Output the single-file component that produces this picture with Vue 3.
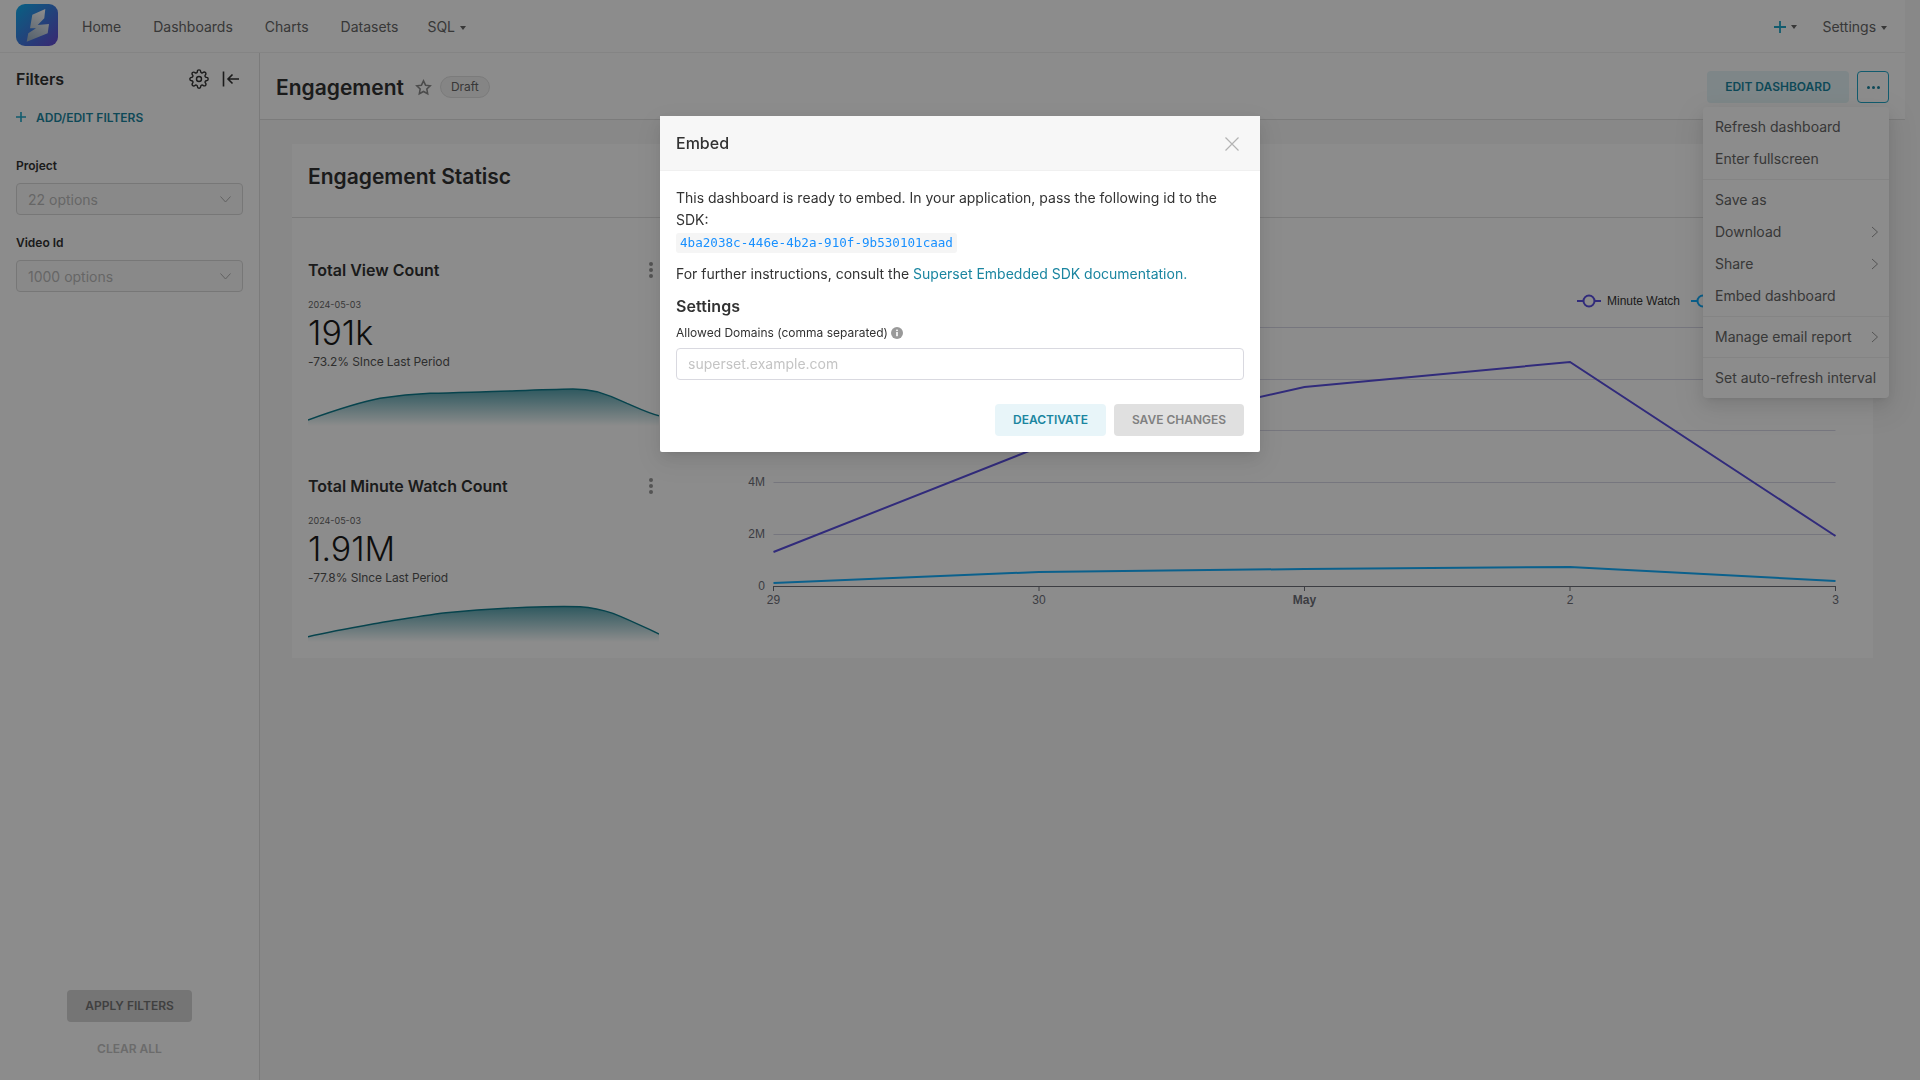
<template>
  <div class="page">
    <div class="shell">
      <header class="topbar">
        <svg class="logo" width="42" height="42" viewBox="0 0 42 42">
          <defs>
            <linearGradient id="logoBg" x1="0" y1="0" x2="1" y2="1">
              <stop offset="0" stop-color="#10b0f0" />
              <stop offset="1" stop-color="#6a48d0" />
            </linearGradient>
            <linearGradient id="logoS" x1="0.7" y1="0" x2="0.3" y2="1">
              <stop offset="0" stop-color="#ffffff" />
              <stop offset="1" stop-color="#9fb4c8" />
            </linearGradient>
          </defs>
          <rect width="42" height="42" rx="9" fill="url(#logoBg)" />
          <path d="M16.3 10.7 29.3 5 28.3 14.3 21.7 21 33 20 31.7 29.3 10.7 37.7 12.3 29.3 20 24.3 14 24.3Z" fill="url(#logoS)" />
        </svg>
        <nav class="nav">
          <a v-for="item in navItems" :key="item" class="nav-link">{{ item }}</a>
          <a class="nav-link sql">SQL <i class="caret"></i></a>
        </nav>
        <div class="topbar-right">
          <span class="plus">
            <svg width="14" height="14" viewBox="0 0 14 14"><path d="M7 1v12M1 7h12" stroke="#20a7c9" stroke-width="1.8" fill="none" /></svg>
            <i class="caret"></i>
          </span>
          <a class="nav-link">Settings <i class="caret"></i></a>
        </div>
      </header>

      <div class="body">
        <aside class="sidebar">
          <div class="filters-head">
            <span class="filters-title">Filters</span>
            <svg class="gear" width="20" height="20" viewBox="0 0 24 24" fill="none" stroke="#323232" stroke-width="1.7">
              <circle cx="12" cy="12" r="3" />
              <path d="M19.4 15a1.65 1.65 0 0 0 .33 1.82l.06.06a2 2 0 0 1 0 2.83 2 2 0 0 1-2.83 0l-.06-.06a1.65 1.65 0 0 0-1.82-.33 1.65 1.65 0 0 0-1 1.51V21a2 2 0 0 1-2 2 2 2 0 0 1-2-2v-.09A1.65 1.65 0 0 0 9 19.4a1.65 1.65 0 0 0-1.82.33l-.06.06a2 2 0 0 1-2.83 0 2 2 0 0 1 0-2.83l.06-.06a1.65 1.65 0 0 0 .33-1.82 1.65 1.65 0 0 0-1.51-1H3a2 2 0 0 1-2-2 2 2 0 0 1 2-2h.09A1.65 1.65 0 0 0 4.6 9a1.65 1.65 0 0 0-.33-1.82l-.06-.06a2 2 0 0 1 0-2.83 2 2 0 0 1 2.83 0l.06.06a1.65 1.65 0 0 0 1.82.33H9a1.65 1.65 0 0 0 1-1.51V3a2 2 0 0 1 2-2 2 2 0 0 1 2 2v.09a1.65 1.65 0 0 0 1 1.51 1.65 1.65 0 0 0 1.82-.33l.06-.06a2 2 0 0 1 2.83 0 2 2 0 0 1 0 2.83l-.06.06a1.65 1.65 0 0 0-.33 1.82V9a1.65 1.65 0 0 0 1.51 1H21a2 2 0 0 1 2 2 2 2 0 0 1-2 2h-.09a1.65 1.65 0 0 0-1.51 1z" />
            </svg>
            <svg class="collapse" width="18" height="16" viewBox="0 0 18 16" fill="none" stroke="#323232" stroke-width="1.6">
              <path d="M1.5 0.5v15M17 8H6M10.5 3.5 6 8l4.5 4.5" />
            </svg>
          </div>
          <div class="add-filter">
            <svg width="10" height="10" viewBox="0 0 10 10"><path d="M5 0v10M0 5h10" stroke="#20a7c9" stroke-width="1.6" fill="none" /></svg>
            <span>ADD/EDIT FILTERS</span>
          </div>
          <div v-for="f in filters" :key="f.label" class="filter">
            <label class="filter-label">{{ f.label }}</label>
            <div class="select">
              <span>{{ f.value }}</span>
              <svg width="11" height="7" viewBox="0 0 11 7" fill="none" stroke="#b0b0b0" stroke-width="1"><path d="M.5 .5 5.5 6l5-5.5" /></svg>
            </div>
          </div>
          <div class="sidebar-foot">
            <button class="apply">APPLY FILTERS</button>
            <span class="clear">CLEAR ALL</span>
          </div>
        </aside>

        <main class="main">
          <div class="titlebar">
            <h1 class="dash-title">Engagement</h1>
            <svg class="star" width="17" height="17" viewBox="0 0 24 24" fill="none" stroke="#8a8a8a" stroke-width="2.2">
              <path d="M12 2.6l2.9 6.1 6.6.9-4.8 4.6 1.2 6.6L12 17.6l-5.9 3.2 1.2-6.6L2.500 9.600l6.600-.9z" />
            </svg>
            <span class="draft">Draft</span>
            <div class="title-actions">
              <button class="edit-btn">EDIT DASHBOARD</button>
              <button class="more-btn"><i></i><i></i><i></i></button>
            </div>
          </div>

          <section class="card">
            <div class="card-head">Engagement Statisc</div>
            <div class="card-body">
              <div class="stats">
                <div v-for="s in stats" :key="s.title" class="stat">
                  <div class="stat-head">
                    <span class="stat-title">{{ s.title }}</span>
                    <span class="kebab"><i></i><i></i><i></i></span>
                  </div>
                  <div class="stat-date">2024-05-03</div>
                  <div class="stat-value">{{ s.value }}</div>
                  <div class="stat-sub">{{ s.sub }}</div>
                  <svg class="spark" width="351" height="50" viewBox="0 0 351 50">
                    <defs>
                      <linearGradient :id="s.id" x1="0" y1="0" x2="0" y2="1">
                        <stop offset="0" stop-color="#0e7b8c" stop-opacity="0.7" />
                        <stop offset="1" stop-color="#0e7b8c" stop-opacity="0" />
                      </linearGradient>
                    </defs>
                    <path :d="s.line + ' V46 H0 Z'" :fill="`url(#${s.id})`" />
                    <path :d="s.line" fill="none" stroke="#0e7b8c" stroke-width="1.4" />
                  </svg>
                </div>
              </div>
              <svg class="chart" width="1214" height="440" viewBox="659 218 1214 440">
                <path v-for="y in gridLines" :key="y" :d="`M773.500 ${y}H1835.500`" stroke="#d8d8e6" stroke-width="1" />
                <path d="M773.500 586.500H1835.500" stroke="#6e7079" stroke-width="1" />
                <path v-for="t in ticks" :key="t.x" :d="`M${t.x} 586v5`" stroke="#6e7079" stroke-width="1" />
                <text v-for="t in ticks" :key="t.label" :x="t.x" y="604" text-anchor="middle" class="axis" :class="{ bold: t.bold }">{{ t.label }}</text>
                <text x="765" y="486" text-anchor="end" class="axis">4M</text>
                <text x="765" y="538" text-anchor="end" class="axis">2M</text>
                <text x="765" y="590" text-anchor="end" class="axis">0</text>
                <path d="M773.500 552 1039 447 1304.500 387 1570 362 1835.500 536" fill="none" stroke="#5a4fe0" stroke-width="2" />
                <path d="M773.500 583 1039 572 1304.500 569 1570 567 1835.500 581" fill="none" stroke="#14b0ff" stroke-width="2" />
                <g fill="none" stroke="#5a4fe0" stroke-width="2">
                  <path d="M1577 301h24" />
                  <circle cx="1589" cy="301" r="5.500" fill="#fff" />
                </g>
                <text x="1607" y="305" class="legend">Minute Watch</text>
                <g fill="none" stroke="#14b0ff" stroke-width="2">
                  <path d="M1691 301h24" />
                  <circle cx="1703" cy="301" r="5.500" fill="#fff" />
                </g>
              </svg>
            </div>
          </section>
        </main>
      </div>
    </div>

    <ul class="menu">
      <template v-for="(item, i) in menuItems" :key="i">
        <li v-if="item === '-'" class="menu-divider"></li>
        <li v-else class="menu-item">
          <span>{{ item.label }}</span>
          <svg v-if="item.sub" width="8" height="12" viewBox="0 0 8 12" fill="none" stroke="#999" stroke-width="1"><path d="M1 1l5.500 5L1 11" /></svg>
        </li>
      </template>
    </ul>

    <div class="overlay">
      <div class="modal">
        <div class="modal-head">
          <span>Embed</span>
          <svg class="close" width="16" height="16" viewBox="0 0 16 16" fill="none" stroke="#b3b3b3" stroke-width="1.200"><path d="M1.500 1.500l13 13M14.500 1.500l-13 13" /></svg>
        </div>
        <div class="modal-body">
          <p class="ready">This dashboard is ready to embed. In your application, pass the following id to the SDK:</p>
          <code class="embed-id">4ba2038c-446e-4b2a-910f-9b530101caad</code>
          <p class="further">For further instructions, consult the <a>Superset Embedded SDK documentation.</a></p>
          <h3 class="settings">Settings</h3>
          <label class="domains">
            Allowed Domains (comma separated)
            <svg width="12" height="12" viewBox="0 0 12 12">
              <circle cx="6" cy="6" r="6" fill="#999" />
              <rect x="5.200" y="5" width="1.600" height="4.200" fill="#fff" />
              <rect x="5.200" y="2.600" width="1.600" height="1.500" fill="#fff" />
            </svg>
          </label>
          <input class="domain-input" type="text" placeholder="superset.example.com" />
          <div class="modal-actions">
            <button class="deactivate">DEACTIVATE</button>
            <button class="save">SAVE CHANGES</button>
          </div>
        </div>
      </div>
    </div>
  </div>
</template>

<script setup>
const navItems = ['Home', 'Dashboards', 'Charts', 'Datasets']

const filters = [
  { label: 'Project', value: '22 options' },
  { label: 'Video Id', value: '1000 options' }
]

const stats = [
  {
    id: 'sparkA',
    title: 'Total View Count',
    value: '191k',
    sub: '-73.2% SInce Last Period',
    line: 'M0 40C25 31 48 23 72 18.300C90 15.500 105 14 122 13.300C140 13 155 12.500 172 12C205 11 235 9.500 265 9C275 9 282 10 289 11.700C300 15 310 19 319 23.300C330 28 340 33 351 35.700'
  },
  {
    id: 'sparkB',
    title: 'Total Minute Watch Count',
    value: '1.91M',
    sub: '-77.8% SInce Last Period',
    line: 'M0 40.700C25 35 48 31 72 26.700C95 23 115 19.500 138 16.700C170 13.500 205 11.500 238 10.700C250 10.500 262 10.500 272 10.700C284 11.500 295 14 305 17.300C322 24 336 31 351 38'
  }
]

const gridLines = [327.5, 379.5, 430.5, 482.5, 534.5]

const ticks = [
  { x: 773.5, label: '29' },
  { x: 1039, label: '30' },
  { x: 1304.5, label: 'May', bold: true },
  { x: 1570, label: '2' },
  { x: 1835.5, label: '3' }
]

const menuItems = [
  { label: 'Refresh dashboard' },
  { label: 'Enter fullscreen' },
  '-',
  { label: 'Save as' },
  { label: 'Download', sub: true },
  { label: 'Share', sub: true },
  { label: 'Embed dashboard' },
  '-',
  { label: 'Manage email report', sub: true },
  '-',
  { label: 'Set auto-refresh interval' }
]
</script>

<style>
html, body {
  margin: 0;
  background: #f7f7f7;
}
</style>

<style scoped>
.page {
  position: relative;
  height: 1080px;
  overflow: hidden;
  background: #f7f7f7;
  font-family: Inter, "Liberation Sans", sans-serif;
  font-size: 14px;
  color: #323232;
}

.shell {
  width: 1905px;
  height: 100%;
  display: flex;
  flex-direction: column;
}

.topbar {
  height: 53px;
  flex: none;
  box-sizing: border-box;
  background: #fff;
  border-bottom: 1px solid #f0f0f0;
  display: flex;
  align-items: flex-start;
  padding: 4px 0 0 16px;
}

.logo {
  flex: none;
}

.nav {
  display: flex;
  gap: 32px;
  margin-left: 24px;
  padding-top: 12px;
}

.nav-link {
  color: #666;
  line-height: 22px;
  white-space: nowrap;
}

.sql {
  margin-left: -3px;
}

.caret {
  display: inline-block;
  width: 0;
  height: 0;
  margin-left: 1px;
  vertical-align: middle;
  border-left: 3.500px solid transparent;
  border-right: 3.500px solid transparent;
  border-top: 4px solid #666;
}

.topbar-right {
  margin-left: auto;
  display: flex;
  align-items: center;
  gap: 25px;
  padding: 12px 18px 0 0;
  height: 22px;
}

.plus {
  display: flex;
  align-items: center;
  gap: 3px;
}

.body {
  flex: 1;
  display: flex;
  min-height: 0;
}

.sidebar {
  width: 260px;
  flex: none;
  box-sizing: border-box;
  background: #fff;
  border-right: 1px solid #e0e0e0;
  padding: 0 16px;
  display: flex;
  flex-direction: column;
}

.filters-head {
  display: flex;
  align-items: center;
  height: 52px;
}

.filters-title {
  font-size: 16px;
  font-weight: 600;
  margin-right: auto;
}

.collapse {
  margin: 0 3px 0 13px;
}

.add-filter {
  display: flex;
  align-items: center;
  gap: 10px;
  height: 22px;
  margin: 1px 0 0;
  font-size: 12px;
  font-weight: 600;
  color: #1a85a0;
}

.add-filter svg {
  flex: none;
}

.filter {
  width: 227px;
}

.filter + .filter {
  margin-top: 20px;
}

.add-filter + .filter {
  margin-top: 30px;
}

.filter-label {
  display: block;
  font-size: 12px;
  font-weight: 600;
  line-height: 16px;
  margin-bottom: 9px;
}

.select {
  height: 32px;
  box-sizing: border-box;
  border: 1px solid #d9d9d9;
  border-radius: 4px;
  padding: 0 11px;
  display: flex;
  align-items: center;
  justify-content: space-between;
  color: #bbb;
  background: #fafafa;
}

.sidebar-foot {
  margin-top: auto;
  padding-bottom: 24px;
  display: flex;
  flex-direction: column;
  align-items: center;
  gap: 18px;
}

.apply {
  width: 125px;
  height: 32px;
  padding: 0 0 2px;
  border: none;
  border-radius: 4px;
  background: #d6d6d6;
  color: #757575;
  font: 600 12px Inter, sans-serif;
}

.clear {
  position: relative;
  top: 1px;
  font-size: 12px;
  font-weight: 600;
  line-height: 16px;
  color: #c4c4c4;
}

.main {
  flex: 1;
  min-width: 0;
  display: flex;
  flex-direction: column;
}

.titlebar {
  height: 67px;
  flex: none;
  box-sizing: border-box;
  background: #fff;
  border-bottom: 1px solid #e0e0e0;
  display: flex;
  align-items: center;
  padding: 2px 16px 0;
}

.dash-title {
  margin: 0;
  font-size: 21px;
  font-weight: 600;
}

.star {
  margin-left: 11px;
}

.draft {
  margin-left: 8px;
  height: 22px;
  box-sizing: border-box;
  padding: 0 10px;
  border: 1px solid #e0e0e0;
  border-radius: 11px;
  background: #f2f2f2;
  font-size: 12px;
  line-height: 20px;
  color: #666;
}

.title-actions {
  margin-left: auto;
  display: flex;
  gap: 8px;
}

.edit-btn {
  width: 142px;
  height: 32px;
  padding: 0 0 1px;
  border: none;
  border-radius: 4px;
  background: #e5f5f8;
  color: #1a85a0;
  font: 600 12px Inter, sans-serif;
}

.more-btn {
  width: 32px;
  height: 32px;
  box-sizing: border-box;
  padding: 0;
  border: 1px solid #20a7c9;
  border-radius: 4px;
  background: #fff;
  display: flex;
  align-items: center;
  justify-content: center;
  gap: 2px;
}

.more-btn i {
  width: 3px;
  height: 3px;
  border-radius: 50%;
  background: #1a85a0;
}

.card {
  margin: 24px 32px 0;
  height: 514px;
  background: #fff;
  display: flex;
  flex-direction: column;
}

.card-head {
  height: 74px;
  flex: none;
  box-sizing: border-box;
  border-bottom: 1px solid #e0e0e0;
  padding: 0 16px 8px;
  display: flex;
  align-items: center;
  font-size: 21px;
  font-weight: 600;
}

.card-body {
  flex: 1;
  display: flex;
  min-height: 0;
}

.stats {
  width: 367px;
  flex: none;
  box-sizing: border-box;
  padding: 40px 0 0 16px;
}

.stat {
  height: 216px;
}

.stat-head {
  display: flex;
  align-items: center;
  justify-content: space-between;
  height: 24px;
  margin-right: 6px;
}

.stat-title {
  font-size: 16px;
  font-weight: 600;
}

.kebab {
  display: flex;
  flex-direction: column;
  gap: 2px;
  width: 4px;
}

.kebab i {
  width: 4px;
  height: 4px;
  border-radius: 50%;
  background: #999;
}

.stat-date {
  margin-top: 17px;
  font-size: 9px;
  line-height: 12px;
  color: #666;
}

.stat-value {
  margin-top: 4px;
  font-size: 34px;
  font-weight: 300;
  line-height: 36px;
  color: #1a1a1a;
}

.stat-sub {
  margin-top: 3px;
  font-size: 12px;
  letter-spacing: -0.1px;
  line-height: 16px;
  color: #555;
}

.spark {
  display: block;
  margin-top: 10px;
}

.chart {
  display: block;
  flex: none;
}

.axis {
  font: 12px "Liberation Sans", sans-serif;
  fill: #6e7079;
}

.axis.bold {
  font-weight: 700;
}

.legend {
  font: 12px "Liberation Sans", sans-serif;
  fill: #333;
}

.menu {
  position: absolute;
  top: 107px;
  left: 1703px;
  width: 186px;
  box-sizing: border-box;
  margin: 0;
  padding: 4px 0;
  list-style: none;
  background: #fff;
  border-radius: 4px;
  box-shadow: 0 3px 6px -4px rgba(0, 0, 0, .12), 0 6px 16px rgba(0, 0, 0, .08), 0 9px 28px 8px rgba(0, 0, 0, .05);
}

.menu-item {
  height: 32px;
  box-sizing: border-box;
  display: flex;
  align-items: center;
  justify-content: space-between;
  padding: 0 10px 1px 12px;
  color: #666;
  white-space: nowrap;
}

.menu-divider {
  height: 1px;
  margin: 4px 0;
  background: #f0f0f0;
}

.overlay {
  position: fixed;
  inset: 0;
  background: rgba(0, 0, 0, .45);
  display: flex;
  justify-content: center;
  align-items: flex-start;
  padding-top: 116px;
}

.modal {
  width: 600px;
  background: #fff;
  border-radius: 2px;
  box-shadow: 0 3px 6px -4px rgba(0, 0, 0, .12), 0 6px 16px rgba(0, 0, 0, .08), 0 9px 28px 8px rgba(0, 0, 0, .05);
}

.modal-head {
  height: 55px;
  box-sizing: border-box;
  background: #f7f7f7;
  border-bottom: 1px solid #f0f0f0;
  padding: 0 20px 0 16px;
  display: flex;
  align-items: center;
  justify-content: space-between;
  font-size: 16px;
  font-weight: 500;
}

.close {
  margin-top: 2px;
}

.modal-body {
  padding: 16px;
}

.ready {
  margin: 0;
  line-height: 22px;
}

.embed-id {
  display: inline-block;
  margin-top: 2px;
  padding: 0 4px;
  height: 20px;
  line-height: 20px;
  background: #f5f5f5;
  border-radius: 3px;
  color: #1890ff;
  font: 12.600px/20px "DejaVu Sans Mono", monospace;
  vertical-align: top;
}

.further {
  margin: 10px 0 0;
  line-height: 22px;
}

.further a {
  color: #1a85a0;
}

.settings {
  margin: 10px 0 0;
  font-size: 16px;
  font-weight: 600;
  letter-spacing: .1px;
  line-height: 22px;
}

.domains {
  display: flex;
  align-items: center;
  gap: 3px;
  margin-top: 8px;
  font-size: 12px;
  line-height: 16px;
}

.domain-input {
  display: block;
  width: 100%;
  height: 32px;
  box-sizing: border-box;
  margin-top: 7px;
  padding: 0 11px 2px;
  border: 1px solid #d9d9e0;
  border-radius: 4px;
  outline: none;
  font: 14px Inter, sans-serif;
}

.domain-input::placeholder {
  color: #c4c4c4;
}

.modal-actions {
  display: flex;
  justify-content: flex-end;
  gap: 8px;
  margin-top: 24px;
}

.modal-actions button {
  height: 32px;
  padding: 0 0 1px;
  border: none;
  border-radius: 4px;
  font: 600 12px Inter, sans-serif;
}

.deactivate {
  width: 111px;
  background: #e8f5f9;
  color: #1a85a0;
}

.save {
  width: 130px;
  background: #e0e0e0;
  color: #808080;
}
</style>
